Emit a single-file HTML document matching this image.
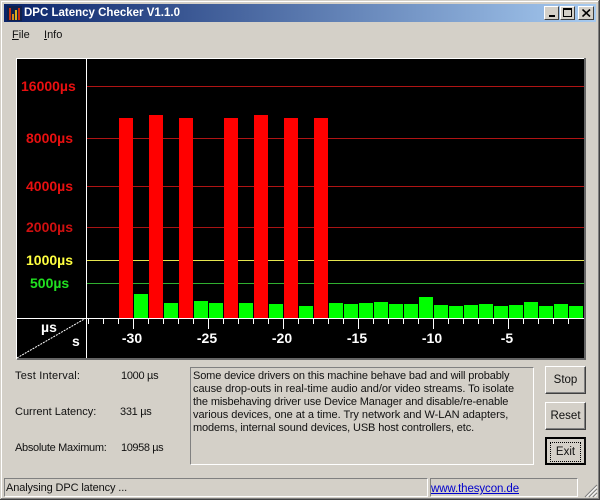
<!DOCTYPE html>
<html><head><meta charset="utf-8"><style>
html,body{margin:0;padding:0;background:#d4d0c8;}
#w{position:relative;width:600px;height:500px;overflow:hidden;background:#d4d0c8;font-family:"Liberation Sans",sans-serif;font-size:11px;color:#111;}
#w div,#w a{position:absolute;white-space:nowrap;}
.t{line-height:13px;}
.btn{box-sizing:border-box;background:#d4d0c8;border:1px solid;border-color:#fff #404040 #404040 #fff;box-shadow:inset -1px -1px 0 #808080;text-align:center;font-size:11.5px;}
.wb{box-sizing:border-box;width:15px;height:14px;top:6px;background:#d4d0c8;border:1px solid;border-color:#fff #404040 #404040 #fff;}
.r{background:#f00;width:14px;}
.g{background:#0f0;width:14px;}
.gl{left:87px;width:497px;height:1px;}
.yl{font-weight:bold;font-size:14px;line-height:16px;}
.xl{font-weight:bold;font-size:14px;line-height:16px;color:#fff;text-align:center;width:40px;top:330px;}
.tick{background:#fff;width:1px;top:319px;height:5px;}
</style></head><body><div id="w">
<div style="left:0;top:0;width:600px;height:1px;background:#d4d0c8"></div>
<div style="left:1px;top:1px;width:598px;height:1px;background:#fff"></div>
<div style="left:1px;top:1px;width:1px;height:498px;background:#fff"></div>
<div style="left:598px;top:1px;width:1px;height:498px;background:#808080"></div>
<div style="left:599px;top:0;width:1px;height:500px;background:#404040"></div>
<div style="left:0;top:499px;width:600px;height:1px;background:#404040"></div>
<div style="left:1px;top:498px;width:598px;height:1px;background:#808080"></div>

<div style="left:4px;top:4px;width:592px;height:18px;background:linear-gradient(90deg,#0a246a,#a6caf0)"></div>
<svg style="position:absolute;left:7px;top:6px" width="15" height="15"><rect width="15" height="15" fill="#10204a"/><rect x="2" y="2" width="2" height="12" fill="#c83010"/><rect x="5" y="8" width="2" height="6" fill="#d88a18"/><rect x="8" y="4" width="2" height="10" fill="#d8b020"/><rect x="11" y="2" width="2" height="12" fill="#c83010"/></svg>
<div class="t" style="left:24px;top:7px;color:#fff;font-weight:bold;font-size:11.5px">DPC Latency Checker V1.1.0</div>
<div class="wb" style="left:544px"><div style="left:4px;top:8px;width:6px;height:2px;background:#000"></div></div>
<div class="wb" style="left:560px"><div style="left:2px;top:1px;width:9px;height:9px;box-sizing:border-box;border:1px solid #000;border-top-width:2px"></div></div>
<div class="wb" style="left:578px;width:16px"><svg style="position:absolute;left:3px;top:2px" width="9" height="8"><path d="M0.5 0.5L8 7.500M8 0.5L0.5 7.500" stroke="#000" stroke-width="1.6" fill="none"/></svg></div>

<div class="t" style="left:12px;top:29px"><span style="text-decoration:underline">F</span>ile</div>
<div class="t" style="left:44px;top:29px"><span style="text-decoration:underline">I</span>nfo</div>

<div style="left:16px;top:58px;width:569px;height:1px;background:#fff"></div>
<div style="left:16px;top:58px;width:1px;height:301px;background:#fff"></div>
<div style="left:17px;top:358px;width:568px;height:2px;background:#666"></div>
<div style="left:584px;top:58px;width:2px;height:302px;background:#666"></div>
<div style="left:17px;top:59px;width:567px;height:299px;background:#000"></div>

<div class="gl" style="top:86px;background:#b01414"></div>
<div class="gl" style="top:138px;background:#b01414"></div>
<div class="gl" style="top:186px;background:#b01414"></div>
<div class="gl" style="top:227px;background:#a81414"></div>
<div class="gl" style="top:260px;background:#e6e650"></div>
<div class="gl" style="top:283px;background:#30b030"></div>

<div class="yl" style="left:21px;top:78px;color:#e81010">16000µs</div>
<div class="yl" style="left:26px;top:130px;color:#e81010">8000µs</div>
<div class="yl" style="left:26px;top:178px;color:#e81010">4000µs</div>
<div class="yl" style="left:26px;top:219px;color:#d01010">2000µs</div>
<div class="yl" style="left:26px;top:252px;color:#ffff40">1000µs</div>
<div class="yl" style="left:30px;top:275px;color:#20e020">500µs</div>

<div class="r" style="left:119px;top:118px;height:200px"></div>
<div class="g" style="left:134px;top:294px;height:24px"></div>
<div class="r" style="left:149px;top:115px;height:203px"></div>
<div class="g" style="left:164px;top:303px;height:15px"></div>
<div class="r" style="left:179px;top:118px;height:200px"></div>
<div class="g" style="left:194px;top:301px;height:17px"></div>
<div class="g" style="left:209px;top:303px;height:15px"></div>
<div class="r" style="left:224px;top:118px;height:200px"></div>
<div class="g" style="left:239px;top:303px;height:15px"></div>
<div class="r" style="left:254px;top:115px;height:203px"></div>
<div class="g" style="left:269px;top:304px;height:14px"></div>
<div class="r" style="left:284px;top:118px;height:200px"></div>
<div class="g" style="left:299px;top:306px;height:12px"></div>
<div class="r" style="left:314px;top:118px;height:200px"></div>
<div class="g" style="left:329px;top:303px;height:15px"></div>
<div class="g" style="left:344px;top:304px;height:14px"></div>
<div class="g" style="left:359px;top:303px;height:15px"></div>
<div class="g" style="left:374px;top:302px;height:16px"></div>
<div class="g" style="left:389px;top:304px;height:14px"></div>
<div class="g" style="left:404px;top:304px;height:14px"></div>
<div class="g" style="left:419px;top:297px;height:21px"></div>
<div class="g" style="left:434px;top:305px;height:13px"></div>
<div class="g" style="left:449px;top:306px;height:12px"></div>
<div class="g" style="left:464px;top:305px;height:13px"></div>
<div class="g" style="left:479px;top:304px;height:14px"></div>
<div class="g" style="left:494px;top:306px;height:12px"></div>
<div class="g" style="left:509px;top:305px;height:13px"></div>
<div class="g" style="left:524px;top:302px;height:16px"></div>
<div class="g" style="left:539px;top:306px;height:12px"></div>
<div class="g" style="left:554px;top:304px;height:14px"></div>
<div class="g" style="left:569px;top:306px;height:12px"></div>

<div style="left:86px;top:59px;width:1px;height:299px;background:#fff"></div>
<div style="left:17px;top:318px;width:567px;height:1px;background:#fff"></div>
<svg style="position:absolute;left:17px;top:318px" width="70" height="41"><line x1="0" y1="40" x2="69" y2="0" stroke="#fff" stroke-width="1" stroke-dasharray="2 1"/></svg>
<div class="yl" style="left:41px;top:319px;color:#fff">µs</div>
<div class="yl" style="left:72px;top:333px;color:#fff">s</div>

<div class="tick" style="left:88px"></div><div class="tick" style="left:103px"></div><div class="tick" style="left:118px"></div>
<div class="tick" style="left:133px;height:10px"></div><div class="tick" style="left:148px"></div><div class="tick" style="left:163px"></div><div class="tick" style="left:178px"></div><div class="tick" style="left:193px"></div>
<div class="tick" style="left:208px;height:10px"></div><div class="tick" style="left:223px"></div><div class="tick" style="left:238px"></div><div class="tick" style="left:253px"></div><div class="tick" style="left:268px"></div>
<div class="tick" style="left:283px;height:10px"></div><div class="tick" style="left:298px"></div><div class="tick" style="left:313px"></div><div class="tick" style="left:328px"></div><div class="tick" style="left:343px"></div>
<div class="tick" style="left:358px;height:10px"></div><div class="tick" style="left:373px"></div><div class="tick" style="left:388px"></div><div class="tick" style="left:403px"></div><div class="tick" style="left:418px"></div>
<div class="tick" style="left:433px;height:10px"></div><div class="tick" style="left:448px"></div><div class="tick" style="left:463px"></div><div class="tick" style="left:478px"></div><div class="tick" style="left:493px"></div>
<div class="tick" style="left:508px;height:10px"></div><div class="tick" style="left:523px"></div><div class="tick" style="left:538px"></div><div class="tick" style="left:553px"></div><div class="tick" style="left:568px"></div>

<div class="xl" style="left:112px">-30</div>
<div class="xl" style="left:187px">-25</div>
<div class="xl" style="left:262px">-20</div>
<div class="xl" style="left:337px">-15</div>
<div class="xl" style="left:412px">-10</div>
<div class="xl" style="left:487px">-5</div>

<div class="t" style="left:15px;top:370px;letter-spacing:.2px">Test Interval:</div>
<div class="t" style="left:121px;top:370px;letter-spacing:-.3px">1000 µs</div>
<div class="t" style="left:15px;top:406px">Current Latency:</div>
<div class="t" style="left:120px;top:406px;letter-spacing:-.3px">331 µs</div>
<div class="t" style="left:15px;top:442px;letter-spacing:-.3px">Absolute Maximum:</div>
<div class="t" style="left:121px;top:442px;letter-spacing:-.4px">10958 µs</div>

<div style="left:190px;top:367px;width:344px;height:98px;box-sizing:border-box;border:1px solid;border-color:#808080 #fff #fff #808080"></div>
<div class="t" style="left:193px;top:370px;letter-spacing:-.14px">Some device drivers on this machine behave bad and will probably</div>
<div class="t" style="left:193px;top:383px;letter-spacing:-.05px">cause drop-outs in real-time audio and/or video streams. To isolate</div>
<div class="t" style="left:193px;top:396px;letter-spacing:-.13px">the misbehaving driver use Device Manager and disable/re-enable</div>
<div class="t" style="left:193px;top:409px;letter-spacing:-.03px">various devices, one at a time. Try network and W-LAN adapters,</div>
<div class="t" style="left:193px;top:422px;letter-spacing:-.12px">modems, internal sound devices, USB host controllers, etc.</div>

<div class="btn" style="left:545px;top:366px;width:41px;height:28px;line-height:27px">Stop</div>
<div class="btn" style="left:545px;top:402px;width:41px;height:28px;line-height:27px">Reset</div>
<div class="btn" style="left:545px;top:437px;width:41px;height:28px;line-height:26px;border:2px solid #000;border-right-color:#111;box-shadow:none">Exit<div style="left:3px;top:3px;width:31px;height:20px;box-sizing:border-box;border:1px dotted #000"></div></div>

<div style="left:4px;top:478px;width:424px;height:19px;box-sizing:border-box;border:1px solid;border-color:#808080 #fff #fff #808080"></div>
<div class="t" style="left:6px;top:482px;letter-spacing:-.12px">Analysing DPC latency ...</div>
<div style="left:430px;top:478px;width:148px;height:19px;box-sizing:border-box;border:1px solid;border-color:#808080 #fff #fff #808080"></div>
<a class="t" style="left:431px;top:483px;color:#0000cc;text-decoration:underline;font-size:11.5px;letter-spacing:-.1px">www.thesycon.de</a>
<svg style="position:absolute;left:584px;top:484px" width="14" height="14"><path d="M13 1L1 13M13 5L5 13M13 9L9 13" stroke="#808080" stroke-width="1.2" fill="none"/><path d="M13 2.500L2.500 13M13 6.500L6.500 13M13 10.500L10.500 13" stroke="#fff" stroke-width="1" fill="none"/></svg>
</div></body></html>
